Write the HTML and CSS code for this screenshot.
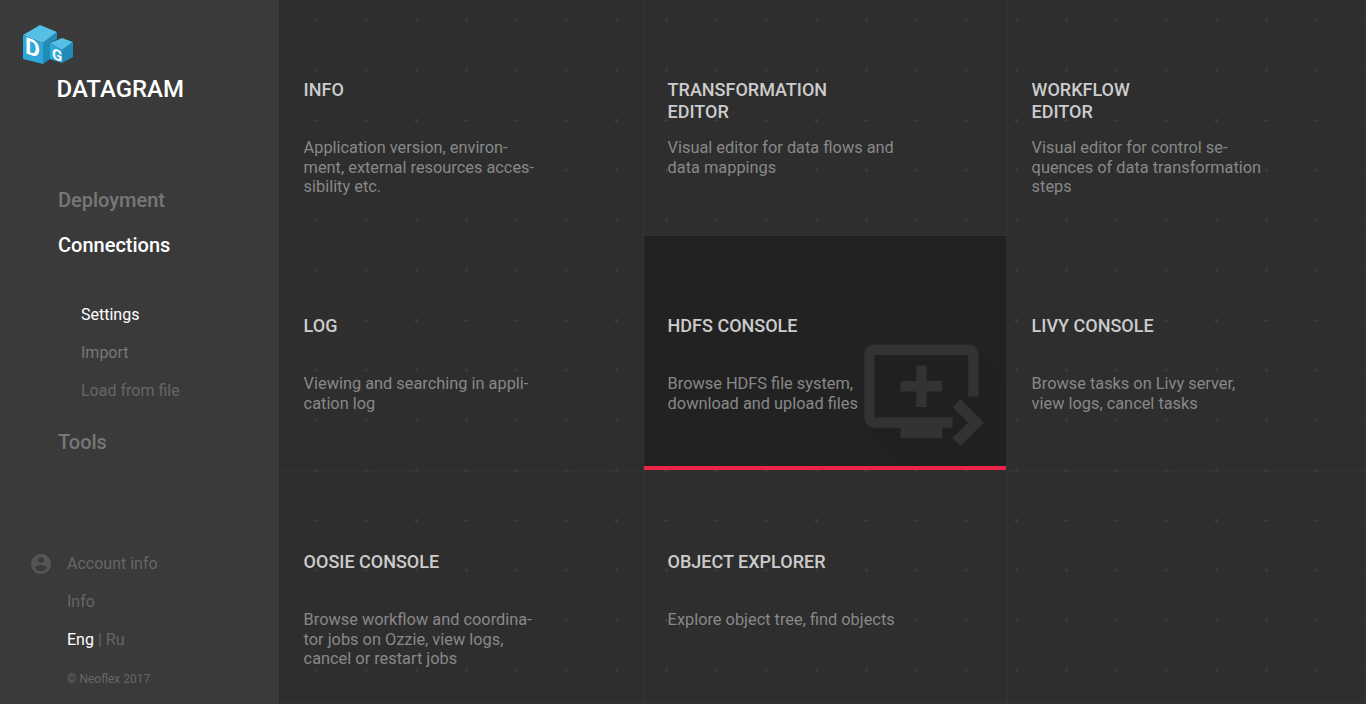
FILE: index.html
```html
<!DOCTYPE html>
<html lang="en">
<head>
    <meta charset="UTF-8">
    <title>Datagram</title>
    <link rel="stylesheet" href="styles.css">
</head>
<body>
    <aside class="sidebar">
        <svg class="logo" width="52" height="42" viewBox="0 0 52 42">
            <polygon points="0,10 17,0 34,7 20,18" fill="#55c0e6"/>
            <polygon points="0,10 20,18 20,39 0,34" fill="#2fa7d8"/>
            <polygon points="34,7 20,18 20,39 27,34 27,18 34,14" fill="#1f8db8"/>
            <polygon points="27,18 39,13 50,17 39,25" fill="#55c0e6"/>
            <polygon points="27,18 39,25 39,38 27,34" fill="#2fa7d8"/>
            <polygon points="39,25 50,17 50,32 39,38" fill="#1f8db8"/>
            <text class="logo-d" transform="translate(2 28) skewY(20)">D</text>
            <text class="logo-g" transform="translate(29 33.5) skewY(20)">G</text>
        </svg>
        <div class="brand">DATAGRAM</div>

        <nav class="nav">
            <a class="nav-main">Deployment</a>
            <a class="nav-main active">Connections</a>
            <div class="subnav">
                <a class="active">Settings</a>
                <a>Import</a>
                <a class="dim">Load from file</a>
            </div>
            <a class="nav-main">Tools</a>
        </nav>

        <div class="bottom">
            <a class="account">
                <svg class="account-icon" width="24" height="24" viewBox="0 0 24 24">
                    <path d="M12 2C6.48 2 2 6.48 2 12s4.48 10 10 10 10-4.48 10-10S17.52 2 12 2zm0 3c1.66 0 3 1.34 3 3s-1.34 3-3 3-3-1.34-3-3 1.34-3 3-3zm0 14.2c-2.5 0-4.71-1.28-6-3.22.03-1.99 4-3.08 6-3.08 1.99 0 5.97 1.09 6 3.08-1.29 1.94-3.5 3.22-6 3.22z"/>
                </svg>
                Account info
            </a>
            <a>Info</a>
            <div class="lang"><span class="active">Eng</span> <span class="sep">|</span> Ru</div>
            <div class="copy">© Neoflex 2017</div>
        </div>
    </aside>

    <main class="tiles">
        <div class="tile">
            <h2>INFO</h2>
            <p>Application version, environ-<br>ment, external resources acces-<br>sibility etc.</p>
        </div>
        <div class="tile">
            <h2>TRANSFORMATION<br>EDITOR</h2>
            <p>Visual editor for data flows and<br>data mappings</p>
        </div>
        <div class="tile">
            <h2>WORKFLOW<br>EDITOR</h2>
            <p>Visual editor for control se-<br>quences of data transformation<br>steps</p>
        </div>
        <div class="tile">
            <h2>LOG</h2>
            <p>Viewing and searching in appli-<br>cation log</p>
        </div>
        <div class="tile hover">
            <h2>HDFS CONSOLE</h2>
            <p>Browse HDFS file system,<br>download and upload files</p>
            <svg class="tile-icon" width="147" height="137" viewBox="0 0 147 137">
                <polygon points="119,22 147,50 147,137 47,137 5.2,95 5.2,26" fill="#202020"/>
                <g transform="scale(5.2)" fill="#333">
                    <path d="M21 3H3c-1.11 0-2 .89-2 2v12c0 1.1.89 2 2 2h5v2h8v-2h2v-2H3V5h18v8h2V5c0-1.11-.9-2-2-2zm-8 7V7h-2v3H8v2h3v3h2v-3h3v-2h-3zm11 8l-4.5 4.5L18 21l3-3-3-3 1.5-1.5L24 18z"/>
                </g>
            </svg>
        </div>
        <div class="tile">
            <h2>LIVY CONSOLE</h2>
            <p>Browse tasks on Livy server,<br>view logs, cancel tasks</p>
        </div>
        <div class="tile">
            <h2>OOSIE CONSOLE</h2>
            <p>Browse workflow and coordina-<br>tor jobs on Ozzie, view logs,<br>cancel or restart jobs</p>
        </div>
        <div class="tile">
            <h2>OBJECT EXPLORER</h2>
            <p>Explore object tree, find objects</p>
        </div>
        <div class="tile"></div>
    </main>
</body>
</html>
```

FILE: styles.css
```css
html, body {
    height: 100%;
}

body {
    font-family: Roboto, "Liberation Sans", sans-serif;
    background-color: #2e2e2e;
    margin: 0;
    height: 704px;
    overflow: hidden;
    display: flex;
}

.sidebar {
    width: 279px;
    flex-shrink: 0;
    background-color: #3a3a3a;
    box-sizing: border-box;
    padding: 25px 0 0 58px;
    display: flex;
    flex-direction: column;
    margin-right: 1px;
}

.logo {
    display: block;
    margin-left: -35px;
}

.logo-d {
    font: 700 23px Roboto, sans-serif;
    fill: #fff;
}

.logo-g {
    font: 700 15px Roboto, sans-serif;
    fill: #fff;
}

.brand {
    font-size: 24px;
    font-weight: 500;
    line-height: 28px;
    color: #fff;
    margin: 8px 0 0 -1.5px;
}

.nav {
    margin-top: 85px;
    display: flex;
    flex-direction: column;
}

.nav-main {
    font-size: 20px;
    font-weight: 500;
    line-height: 24px;
    color: #777;
    margin-bottom: 21px;
}

.subnav {
    display: flex;
    flex-direction: column;
    gap: 19px;
    font-size: 16px;
    line-height: 19px;
    color: #777;
    margin: 48px 0 30px 23px;
}

.nav .active,
.lang .active {
    color: #fff;
}

.nav-main.active {
    margin-bottom: 0;
}

.subnav .dim {
    color: #666;
}

.bottom {
    margin: 79px 0 0 9px;
    display: flex;
    flex-direction: column;
    gap: 19px;
    font-size: 16px;
    line-height: 19px;
    color: #666;
}

.account {
    position: relative;
}

.account-icon {
    position: absolute;
    left: -38px;
    top: -2px;
    fill: #555;
}

.lang .sep {
    color: #666;
}

.copy {
    font-size: 12px;
    line-height: 15px;
    margin-top: 4px;
}

.tiles {
    flex: 1;
    display: grid;
    grid-template-columns: 364px 364px 358px;
    grid-template-rows: 236px 236px 232px;
    background-image: url("data:image/svg+xml,%3Csvg xmlns='http://www.w3.org/2000/svg' width='50' height='50'%3E%3Cpath fill='%233c3c3c' d='M0 2h5v1H0zM2 0h1v5H2z'/%3E%3C/svg%3E");
    background-size: 50px 50px;
    background-position: 34px 18px;
}

.tile {
    position: relative;
    box-sizing: border-box;
    padding: 79px 100px 0 23.6px;
    border-right: 1px solid #333;
    border-bottom: 1px solid #333;
}

.tile h2 {
    font-size: 18px;
    font-weight: 500;
    line-height: 22px;
    color: #ccc;
    margin: 0;
    height: 46px;
}

.tile p {
    font-size: 16.35px;
    line-height: 19.5px;
    color: #888;
    margin: 13px 0 0;
    white-space: nowrap;
}

.tile.hover {
    background-color: #222;
    border: none;
    border-bottom: 4px solid #ef2348;
    height: 234px;
    margin: 0 2px 2px 0;
}

.tile-icon {
    position: absolute;
    right: 0;
    bottom: 0;
}
```
